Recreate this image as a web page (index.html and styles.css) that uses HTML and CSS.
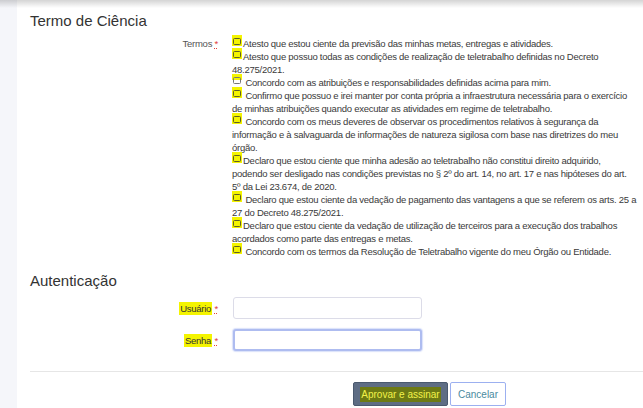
FILE: index.html
```html
<!DOCTYPE html>
<html lang="pt-BR">
<head>
<meta charset="utf-8">
<title>Termo de Ciência</title>
<link rel="stylesheet" href="styles.css">
</head>
<body>
<div class="shade"></div>
<div class="layout">
  <aside class="side"></aside>
  <main class="card">
    <h2 class="section-title">Termo de Ciência</h2>
    <div class="field field-terms">
      <div class="field-label">Termos <abbr class="req" title="obrigatório">*</abbr></div>
      <div class="terms">
        <label class="term"><span class="mark"><span class="box"></span></span>Atesto que estou ciente da previsão das minhas metas, entregas e atividades.</label>
        <label class="term"><span class="mark"><span class="box"></span></span>Atesto que possuo todas as condições de realização de teletrabalho definidas no Decreto 48.275/2021.</label>
        <label class="term"><span class="mark mark-half"><span class="box"></span></span> Concordo com as atribuições e responsabilidades definidas acima para mim.</label>
        <label class="term"><span class="mark"><span class="box"></span></span> Confirmo que possuo e irei manter por conta própria a infraestrutura necessária para o exercício de minhas atribuições quando executar as atividades em regime de teletrabalho.</label>
        <label class="term"><span class="mark"><span class="box"></span></span> Concordo com os meus deveres de observar os procedimentos relativos à segurança da informação e à salvaguarda de informações de natureza sigilosa com base nas diretrizes do meu órgão.</label>
        <label class="term"><span class="mark"><span class="box"></span></span>Declaro que estou ciente que minha adesão ao teletrabalho não constitui direito adquirido, podendo ser desligado nas condições previstas no § 2º do art. 14, no art. 17 e nas hipóteses do art. 5º da Lei 23.674, de 2020.</label>
        <label class="term"><span class="mark"><span class="box"></span></span> Declaro que estou ciente da vedação de pagamento das vantagens a que se referem os arts. 25 a 27 do Decreto 48.275/2021.</label>
        <label class="term"><span class="mark"><span class="box"></span></span>Declaro que estou ciente da vedação de utilização de terceiros para a execução dos trabalhos acordados como parte das entregas e metas.</label>
        <label class="term"><span class="mark"><span class="box"></span></span> Concordo com os termos da Resolução de Teletrabalho vigente do meu Órgão ou Entidade.</label>
      </div>
    </div>

    <h2 class="section-title auth-title">Autenticação</h2>
    <div class="field field-input">
      <div class="field-label"><span class="hl">Usuário</span> <abbr class="req" title="obrigatório">*</abbr></div>
      <div class="control"><input class="input" type="text"></div>
    </div>
    <div class="field field-input field-second">
      <div class="field-label"><span class="hl">Senha</span> <abbr class="req" title="obrigatório">*</abbr></div>
      <div class="control"><input class="input input-focus" type="password"></div>
    </div>

    <hr class="divider">
    <div class="actions">
      <button class="btn btn-primary" type="button"><span class="hl-dark">Aprovar e assinar</span></button>
      <button class="btn btn-default" type="button">Cancelar</button>
    </div>
  </main>
</div>
</body>
</html>
```
FILE: styles.css
```css
* { box-sizing: border-box; }

html, body {
  margin: 0;
  padding: 0;
  background: #ffffff;
  font-family: "Liberation Sans", Arial, sans-serif;
  color: #333333;
  overflow: hidden;
}

.shade {
  position: absolute;
  top: 0;
  left: 0;
  right: 0;
  height: 8px;
  background: linear-gradient(to bottom, rgba(0, 0, 0, 0.17), rgba(0, 0, 0, 0));
  pointer-events: none;
}

.layout {
  display: flex;
  min-height: 408px;
}

.side {
  width: 17px;
  flex: 0 0 17px;
  background: #f5f6fa;
}

.card {
  flex: 1;
  background: #ffffff;
  padding: 12px 0 0 13px;
}

.section-title {
  margin: 0;
  font-size: 15px;
  line-height: 18px;
  font-weight: normal;
  color: #333333;
}

.auth-title {
  margin-top: 14px;
}

.field {
  display: grid;
  grid-template-columns: 188px 1fr;
  column-gap: 14px;
}

.field-terms {
  margin-top: 7px;
  font-size: 9.5px;
  letter-spacing: -0.25px;
  line-height: 13px;
}

.field-label {
  text-align: right;
  color: #555555;
  font-size: 9.5px;
  letter-spacing: -0.25px;
}

.req {
  color: #e0403a;
  text-decoration: underline dotted #e0403a;
  border: 0;
}

.terms {
  width: 405px;
  color: #3a3a3a;
}

.term {
  display: block;
}

.mark {
  display: inline-block;
  position: relative;
  width: 10px;
  height: 11px;
  margin-top: -3px;
  margin-right: 1px;
  vertical-align: 1px;
  background: #f4f400;
}

.mark-half {
  background: linear-gradient(to bottom, #f4f400 0, #f4f400 55%, transparent 55%);
}

.box {
  position: absolute;
  left: 1px;
  top: 3px;
  width: 8px;
  height: 7px;
  border: 1px solid #5e5e28;
  border-radius: 1.5px;
}

.mark-half .box {
  border-color: #777777;
}

.field-input {
  margin-top: 7px;
  align-items: center;
}

.field-second {
  margin-top: 10px;
}

.field-input .field-label {
  font-size: 9.5px;
  color: #333333;
}

.hl {
  background: #f4f400;
  padding: 1px 1px;
}

.control {
  display: flex;
}

.input {
  width: 189px;
  height: 22px;
  margin-left: 1px;
  border: 1px solid #dcdce8;
  border-radius: 3px;
  background: #ffffff;
  font: inherit;
}

.input-focus {
  border: 2px solid #aebcf0;
  box-shadow: 0 0 1px 1px rgba(150, 170, 240, 0.35);
}

.divider {
  margin: 20px 0 0 0;
  border: 0;
  border-top: 1px solid #e6e6e6;
  height: 0;
}

.actions {
  display: flex;
  gap: 2px;
  margin-top: 10px;
  padding-left: 323px;
}

.btn {
  height: 24px;
  padding: 0 6px;
  font-family: "Liberation Sans", Arial, sans-serif;
  font-size: 10px;
  white-space: nowrap;
  border-radius: 2px;
  cursor: pointer;
}

.btn-primary {
  width: 95px;
  background: #5e6d84;
  border: 1px solid #4a596e;
  color: #f2f24a;
}

.hl-dark {
  background: #6d7a14;
  padding: 2px 1px;
}

.btn-default {
  width: 56px;
  background: #ffffff;
  border: 1px solid #9cb0f0;
  color: #4a8a9e;
}
```
